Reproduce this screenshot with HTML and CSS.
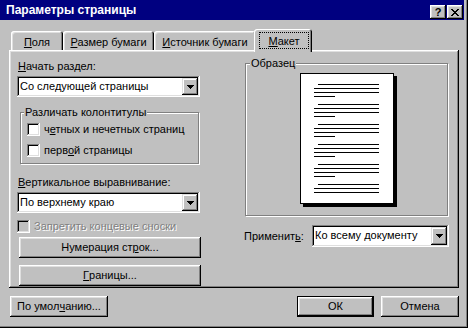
FILE: index.html
```html
<!DOCTYPE html>
<html lang="ru">
<head>
    <meta charset="UTF-8">
    <title>Параметры страницы</title>
    <link rel="stylesheet" href="styles.css">
</head>
<body>
    <div class="window">
        <div class="titlebar">
            <span class="title">Параметры страницы</span>
            <div class="title-buttons">
                <span class="tbtn help">?</span>
                <span class="tbtn close">
                    <svg width="8" height="7" viewBox="0 0 8 7" shape-rendering="crispEdges">
                        <path d="M0 0h2v1h-2zM6 0h2v1h-2zM1 1h2v1h-2zM5 1h2v1h-2zM2 2h4v1h-4zM3 3h2v1h-2zM2 4h4v1h-4zM1 5h2v1h-2zM5 5h2v1h-2zM0 6h2v1h-2zM6 6h2v1h-2z" fill="#000"/>
                    </svg>
                </span>
            </div>
        </div>

        <div class="content">
            <div class="tabs">
                <div class="tab tab-fields"><u>П</u>оля</div>
                <div class="tab tab-size"><u>Р</u>азмер бумаги</div>
                <div class="tab tab-source"><u>И</u>сточник бумаги</div>
                <div class="tab tab-layout active"><span class="focus"><u>М</u>акет</span></div>
            </div>

            <div class="panel">
                <div class="col-left">
                    <div class="lbl"><u>Н</u>ачать раздел:</div>
                    <div class="select">
                        <span class="value">Со следующей страницы</span>
                        <span class="arrow"><svg width="7" height="4" viewBox="0 0 7 4" shape-rendering="crispEdges"><path d="M0 0h7v1h-7zM1 1h5v1h-5zM2 2h3v1h-3zM3 3h1v1h-1z" fill="#000"/></svg></span>
                    </div>

                    <div class="group headers">
                        <div class="group-title">Различать колонтитулы</div>
                        <div class="check"><span class="box"></span><span>ч<u>е</u>тных и нечетных страниц</span></div>
                        <div class="check"><span class="box"></span><span>перв<u>о</u>й страницы</span></div>
                    </div>

                    <div class="lbl lbl-valign"><u>В</u>ертикальное выравнивание:</div>
                    <div class="select">
                        <span class="value">По верхнему краю</span>
                        <span class="arrow"><svg width="7" height="4" viewBox="0 0 7 4" shape-rendering="crispEdges"><path d="M0 0h7v1h-7zM1 1h5v1h-5zM2 2h3v1h-3zM3 3h1v1h-1z" fill="#000"/></svg></span>
                    </div>

                    <div class="check disabled"><span class="box"></span><span>Запретить концевые сноски</span></div>

                    <div class="btn btn-wide btn-lines">Нумерация ст<u>р</u>ок...</div>
                    <div class="btn btn-wide btn-borders"><u>Г</u>раницы...</div>
                </div>

                <div class="col-right">
                    <div class="group sample">
                        <div class="group-title">Образец</div>
                        <div class="page">
                            <div class="para"><div class="ln first"></div><div class="ln"></div><div class="ln"></div><div class="ln last"></div></div>
                            <div class="para"><div class="ln first"></div><div class="ln"></div><div class="ln"></div><div class="ln last"></div></div>
                            <div class="para"><div class="ln first"></div><div class="ln"></div><div class="ln"></div><div class="ln last"></div></div>
                            <div class="para"><div class="ln first"></div><div class="ln"></div><div class="ln"></div><div class="ln last"></div></div>
                            <div class="para"><div class="ln first"></div><div class="ln"></div><div class="ln"></div><div class="ln last"></div></div>
                            <div class="para"><div class="ln first"></div><div class="ln"></div><div class="ln"></div></div>
                        </div>
                    </div>

                    <div class="apply">
                        <span class="apply-lbl">Применит<u>ь</u>:</span>
                        <div class="select sel-apply">
                            <span class="value">Ко всему документу</span>
                            <span class="arrow"><svg width="7" height="4" viewBox="0 0 7 4" shape-rendering="crispEdges"><path d="M0 0h7v1h-7zM1 1h5v1h-5zM2 2h3v1h-3zM3 3h1v1h-1z" fill="#000"/></svg></span>
                        </div>
                    </div>
                </div>
            </div>

            <div class="footer">
                <div class="btn btn-default-settings">По умол<u>ч</u>анию...</div>
                <div class="footer-right">
                    <div class="btn btn-ok default">ОК</div>
                    <div class="btn btn-cancel">Отмена</div>
                </div>
            </div>
        </div>
    </div>
</body>
</html>
```

FILE: styles.css
```css
* {
    margin: 0;
    padding: 0;
    box-sizing: border-box;
}
body {
    width: 468px;
    height: 328px;
    overflow: hidden;
    background-color: #c0c0c0;
    font-family: 'Liberation Sans', Arial, sans-serif;
    font-size: 11px;
    line-height: 13px;
    color: #000;
}
u {
    text-decoration-thickness: 1px;
    text-underline-offset: 1px;
}

/* window frame */
.window {
    width: 468px;
    height: 328px;
    background-color: #c0c0c0;
    box-shadow: inset -1px -1px #000, inset -2px -2px #808080;
    display: flex;
    flex-direction: column;
}
.titlebar {
    width: 464px;
    height: 20px;
    background-color: #000080;
    color: #fff;
    display: flex;
    justify-content: space-between;
    align-items: flex-end;
    padding: 0 1px 1px 6px;
}
.title {
    font-weight: bold;
    font-size: 12px;
    line-height: 14px;
    align-self: center;
    padding-top: 1px;
}
.title-buttons {
    display: flex;
    gap: 1px;
}
.tbtn {
    width: 16px;
    height: 14px;
    background-color: #c0c0c0;
    color: #000;
    box-shadow: inset -1px -1px #000, inset 1px 1px #fff, inset -2px -2px #808080, inset 2px 2px #dfdfdf;
    display: flex;
    justify-content: center;
    align-items: center;
}
.tbtn.help {
    font-weight: bold;
    font-size: 11px;
    line-height: 11px;
}

/* body */
.content {
    padding: 0 9px;
    display: flex;
    flex-direction: column;
}
.tabs {
    height: 30px;
    display: flex;
    align-items: flex-end;
    padding-left: 2px;
}
.tab {
    height: 19px;
    padding-top: 5px;
    text-align: center;
    background-color: #c0c0c0;
    border-radius: 3px 3px 0 0;
    box-shadow: inset 1px 1px #fff, inset -1px 0 #000, inset -2px 0 #808080, inset 2px 2px #dfdfdf;
}
.tab-fields { width: 52px; }
.tab-size { width: 91px; }
.tab-source { width: 102px; }
.tab.active {
    width: 58px;
    height: 23px;
    margin: 0 -2px -2px -2px;
    padding: 3px 3px 0 5px;
    position: relative;
    z-index: 1;
    box-shadow: inset 1px 1px #fff, inset -1px 0 #000, inset -2px 0 #808080;
}
.tab .focus {
    display: block;
    height: 17px;
    padding-top: 2px;
    border: 1px dotted #000;
}

.panel {
    height: 238px;
    display: grid;
    grid-template-columns: 183px 206px;
    column-gap: 43px;
    padding: 10px 10px 0 8px;
    box-shadow: inset -1px -1px #000, inset 1px 1px #fff, inset -2px -2px #808080, inset 2px 2px #dfdfdf;
}

/* left column */
.col-left {
    display: flex;
    flex-direction: column;
}
.lbl {
    margin-left: 1px;
    margin-bottom: 3px;
}
.lbl-valign {
    margin-top: 12px;
}
.select {
    height: 21px;
    display: flex;
    background-color: #fff;
    padding: 2px;
    box-shadow: inset -1px -1px #fff, inset 1px 1px #808080, inset -2px -2px #dfdfdf, inset 2px 2px #000;
}
.select .value {
    flex: 1;
    padding-left: 1px;
    line-height: 17px;
    white-space: nowrap;
    overflow: hidden;
}
.select .arrow {
    width: 16px;
    background-color: #c0c0c0;
    box-shadow: inset -1px -1px #000, inset 1px 1px #dfdfdf, inset -2px -2px #808080, inset 2px 2px #fff;
    display: flex;
    justify-content: center;
    align-items: center;
}

/* etched group box */
.group {
    border: 1px solid #808080;
    box-shadow: 1px 1px 0 #fff, inset 1px 1px 0 #fff;
}
.group-title {
    width: fit-content;
    margin: -7px 0 0 3px;
    padding: 0 1px;
    background-color: #c0c0c0;
    white-space: nowrap;
}
.headers {
    margin: 15px 0 0 3px;
    width: 179px;
    padding: 0 0 6px 6px;
    display: flex;
    flex-direction: column;
    gap: 8px;
}
.headers .group-title {
    margin-left: -3px;
    margin-bottom: -4px;
}
.check {
    display: flex;
    align-items: center;
    gap: 4px;
    height: 13px;
    white-space: nowrap;
}
.check .box {
    width: 13px;
    height: 13px;
    background-color: #fff;
    box-shadow: inset -1px -1px #fff, inset 1px 1px #808080, inset -2px -2px #dfdfdf, inset 2px 2px #000;
}
.check.disabled {
    margin-top: 7px;
    color: #808080;
    text-shadow: 1px 1px 0 #fff;
}
.check.disabled .box {
    background-color: #c0c0c0;
}

.btn {
    height: 21px;
    display: flex;
    justify-content: center;
    align-items: center;
    background-color: #c0c0c0;
    box-shadow: inset -1px -1px #000, inset 1px 1px #fff, inset -2px -2px #808080, inset 2px 2px #dfdfdf;
    white-space: nowrap;
}
.btn-wide {
    width: 182px;
    margin-left: 2px;
}
.btn-lines {
    margin-top: 4px;
}
.btn-borders {
    margin-top: 7px;
}

/* right column */
.col-right {
    display: flex;
    flex-direction: column;
}
.sample {
    margin: 3px 1px 0 2px;
    height: 153px;
    display: flex;
    flex-direction: column;
    align-items: center;
}
.sample .group-title {
    align-self: flex-start;
    margin-left: 4px;
}
.page {
    margin-top: 3px;
    width: 94px;
    height: 131px;
    background-color: #fff;
    border: 1px solid #000;
    box-shadow: 3px 3px 0 #000;
    padding: 10px 14px 0 13px;
    overflow: hidden;
}
.para {
    margin-bottom: 7px;
}
.ln {
    height: 1px;
    background-color: #000;
    margin-bottom: 3px;
}
.ln.first {
    margin-left: 4px;
}
.ln.last {
    width: 21px;
    margin-bottom: 0;
}
.apply {
    margin-top: 9px;
    display: flex;
    align-items: center;
}
.apply-lbl {
    width: 69px;
    padding-left: 1px;
}
.sel-apply {
    width: 137px;
    height: 22px;
}

/* footer */
.footer {
    margin-top: 8px;
    display: flex;
    justify-content: space-between;
    padding-left: 1px;
}
.footer-right {
    display: flex;
    gap: 7px;
}
.btn-default-settings {
    width: 98px;
}
.btn-ok {
    width: 77px;
}
.btn-cancel {
    width: 78px;
}
.btn.default {
    box-shadow: inset 0 0 0 1px #000, inset -2px -2px #000, inset 2px 2px #fff, inset -3px -3px #808080, inset 3px 3px #dfdfdf;
}
```
